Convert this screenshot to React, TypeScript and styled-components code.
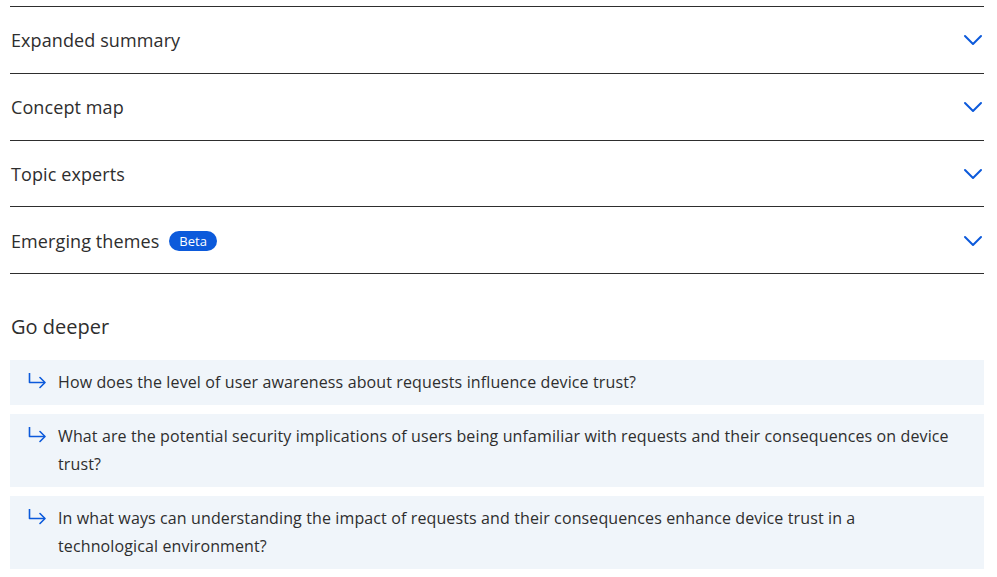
import * as React from 'react';
import styled, { createGlobalStyle } from 'styled-components';

const GlobalStyle = createGlobalStyle`
	html, body {
		margin: 0;
		padding: 0;
		background: #ffffff;
	}
	body {
		font-family: 'Open Sans', 'Noto Sans', sans-serif;
		color: #2e2e2e;
	}
`;

const Page = styled.div`
	padding: 6px 13px 0 10px;
`;

const SectionList = styled.div`
	display: flex;
	flex-direction: column;
	border-bottom: 1px solid #2e2e2e;
`;

const SectionRow = styled.div`
	display: flex;
	align-items: center;
	justify-content: space-between;
	box-sizing: border-box;
	height: 66.75px;
	border-top: 1px solid #2e2e2e;
	padding: 1px 1px 0;
	cursor: pointer;
`;

const SectionTitle = styled.div`
	display: flex;
	align-items: center;
	gap: 10px;
	font-size: 18px;
	letter-spacing: 0.1px;
	color: #2e2e2e;
`;

const Badge = styled.span`
	display: inline-flex;
	align-items: center;
	justify-content: center;
	height: 20px;
	padding: 0 10px;
	border-radius: 10px;
	background-color: #0c5adb;
	color: #ffffff;
	font-size: 13px;
	letter-spacing: 0;
`;

const Heading = styled.h2`
	margin: 39px 0 20px 1px;
	font-size: 20px;
	font-weight: 400;
	color: #2e2e2e;
`;

const QuestionList = styled.div`
	display: flex;
	flex-direction: column;
	gap: 9px;
`;

const Question = styled.div`
	display: flex;
	align-items: flex-start;
	gap: 12px;
	background-color: #f0f5fa;
	padding: 8px 30px 9px 18px;
	font-size: 16px;
	letter-spacing: 0.12px;
	line-height: 28px;
	color: #2e2e2e;
	cursor: pointer;
`;

const IconWrap = styled.span`
	display: flex;
	flex-shrink: 0;
	padding-top: 4px;
`;

const Chevron = () => (
	<svg width="20" height="12" viewBox="0 0 20 12" fill="none">
		<path d="M2 2l8 8 8-8" stroke="#0c5adb" strokeWidth="2" strokeLinecap="round" strokeLinejoin="round" />
	</svg>
);

const CornerArrow = () => (
	<svg width="18" height="18" viewBox="0 0 18 18" fill="none">
		<path d="M1.5 1v9.5h15" stroke="#0c5adb" strokeWidth="1.6" strokeLinejoin="round" />
		<path d="M12 5.5l5 5-5 5" stroke="#0c5adb" strokeWidth="1.6" strokeLinecap="round" strokeLinejoin="round" />
	</svg>
);

const sections = [
	{ id: 'summary', name: 'Expanded summary' },
	{ id: 'concept-map', name: 'Concept map' },
	{ id: 'experts', name: 'Topic experts' },
	{ id: 'themes', name: 'Emerging themes', beta: true }
];

const questions = [
	'How does the level of user awareness about requests influence device trust?',
	'What are the potential security implications of users being unfamiliar with requests and their consequences on device trust?',
	'In what ways can understanding the impact of requests and their consequences enhance device trust in a technological environment?'
];

const App = () => {
	return (
		<Page>
			<GlobalStyle />
			<SectionList>
				{sections.map((section) => (
					<SectionRow key={section.id}>
						<SectionTitle>
							{section.name}
							{section.beta && <Badge>Beta</Badge>}
						</SectionTitle>
						<Chevron />
					</SectionRow>
				))}
			</SectionList>
			<Heading>Go deeper</Heading>
			<QuestionList>
				{questions.map((q) => (
					<Question key={q}>
						<IconWrap>
							<CornerArrow />
						</IconWrap>
						<span>{q}</span>
					</Question>
				))}
			</QuestionList>
		</Page>
	);
};

export default App;
